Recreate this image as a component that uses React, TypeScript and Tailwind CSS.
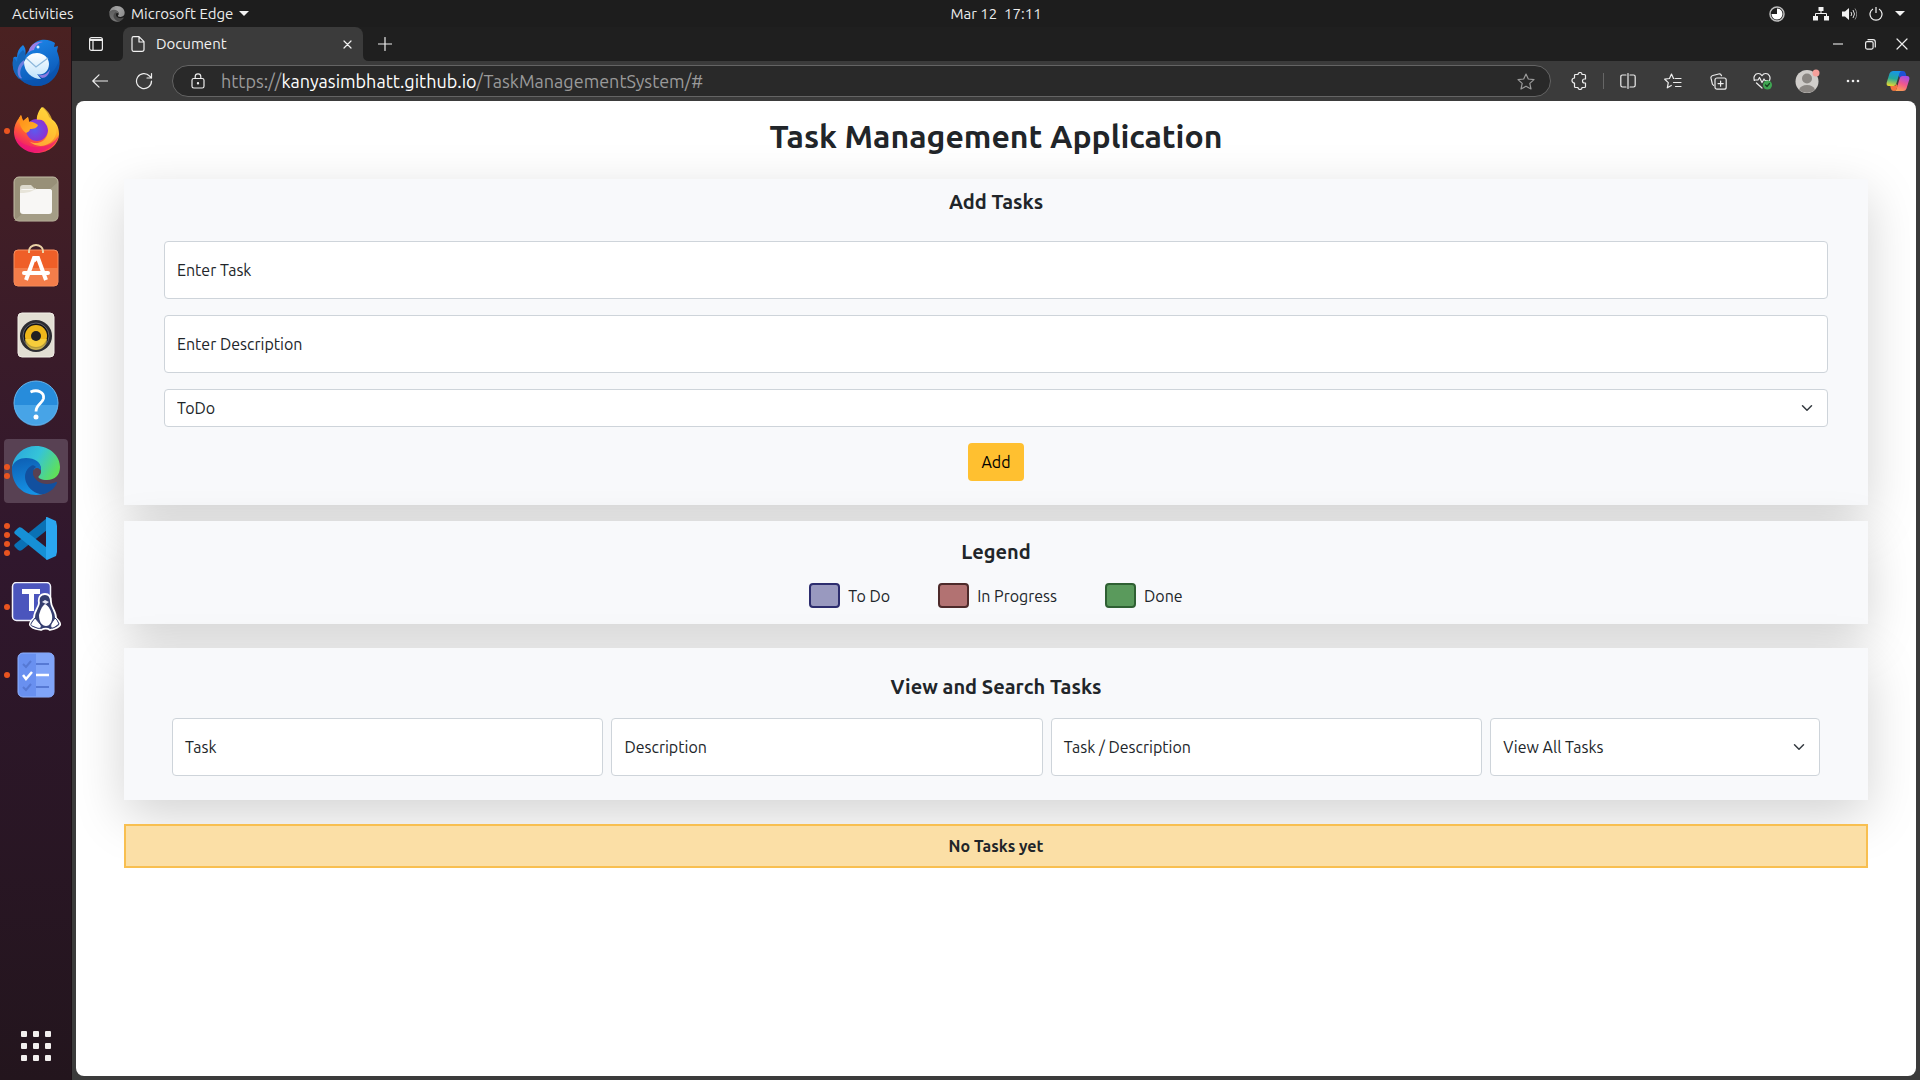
import React, { ReactNode } from "react";

/* ---------- Dock icons ---------- */

const Thunderbird = () => (
  <svg width="50" height="50" viewBox="0 -1 50 50" aria-hidden="true">
    <defs>
      <linearGradient id="tb1" x1="0" y1="0" x2="0.4" y2="1">
        <stop offset="0" stopColor="#1f8df0" />
        <stop offset="1" stopColor="#0b57b5" />
      </linearGradient>
      <linearGradient id="tb2" x1="0" y1="0" x2="0" y2="1">
        <stop offset="0" stopColor="#ffffff" />
        <stop offset="1" stopColor="#bfe2fb" />
      </linearGradient>
    </defs>
    <path d="M2 21c-1 7 1 15 8 20 9 8 23 8 31 0 8-7 9-18 6-26l-1-3 1-5-4 1 1-4c-3-2-8-4-14-3-5 1-10 5-12 10l-4 6c1-4 1-8-2-11-4 3-6 7-6 12-3-1-4 0-4 3z" fill="url(#tb1)" />
    <path d="M2 21c-1 8 1 14 6 19-1-7 1-13 6-18 1-4 1-8-2-11-4 3-6 7-6 12-3-5-4-5-4-2z" fill="#1466bb" />
    <path d="M13 25c-4 4-5 10-2 14-1 1-2 0-3-1-3-6-1-13 5-17z" fill="#6f7fe0" />
    <path d="M18 12c1-6 7-10 14-9-5 1-8 4-9 8-2 0-4 1-6 3z" fill="#9a7fe6" />
    <circle cx="27" cy="8" r="1.5" fill="#d8efff" />
    <path d="M10 41c9 8 23 8 31 0 6-6 8-13 7-20-2 8-7 14-15 17-9 4-18 3-23 3z" fill="#0a4fa8" opacity=".55" />
    <path d="M13 23c3-6 7-9 13-9 7 0 12 5 12 11 0 8-7 12-12 10l4 5c-9 0-17-7-17-17z" fill="url(#tb2)" />
    <path d="M15 19l10 9 12-9" fill="none" stroke="#8db8dc" strokeWidth="1.3" />
    <path d="M27 36c6 1 10-2 12-6-1 6-4 9-8 9z" fill="#8b7ae0" />
  </svg>
);

const Firefox = () => (
  <svg width="50" height="50" viewBox="0 1 50 50" aria-hidden="true">
    <defs>
      <linearGradient id="ff1" x1="0.8" y1="0.1" x2="0.3" y2="1">
        <stop offset="0" stopColor="#fff04a" />
        <stop offset="0.35" stopColor="#ffac27" />
        <stop offset="0.65" stopColor="#ff5a36" />
        <stop offset="1" stopColor="#ee0b7c" />
      </linearGradient>
      <radialGradient id="ff2" cx="0.4" cy="0.5" r="0.7">
        <stop offset="0" stopColor="#5a5cf0" />
        <stop offset="1" stopColor="#9a26c8" />
      </radialGradient>
      <linearGradient id="ff3" x1="0" y1="0" x2="1" y2="1">
        <stop offset="0" stopColor="#ff8a16" />
        <stop offset="1" stopColor="#ffb52b" />
      </linearGradient>
    </defs>
    <path d="M31 2c4 3 6 7 7 10l5 4c4 4 5 9 5 13 0 10-10 19-22 19S3 39 3 27c0-6 2-10 5-14l2-3 2 6c2-1 3-3 5-4l1 5c3-1 6 0 7 1l1-1c-1-6 2-12 5-15z" fill="url(#ff1)" />
    <circle cx="26" cy="25" r="11" fill="url(#ff2)" />
    <path d="M8 13l2-3 2 6 5-4 1 5c3-1 6 1 9 3-1 3-4 4-8 4 0 2-2 3-4 4-4-3-7-8-7-15z" fill="url(#ff3)" />
    <path d="M26 15c4-1 7 0 9 3l-2-1c4 4 5 9 3 14-3 7-12 9-18 5 9 9 24 5 27-7 1-5-1-9-4-13 0-4-3-9-9-14-4 4-6 8-6 13z" fill="#ffc936" opacity=".75" />
    <path d="M4 31c2 10 11 16 22 16 11-1 20-7 22-17-4 8-12 12-22 12S8 38 4 31z" fill="#ec1778" opacity=".7" />
  </svg>
);

const Files = () => (
  <svg width="46" height="46" viewBox="0 0 46 46" aria-hidden="true">
    <rect x="1" y="1" width="44" height="44" rx="5" fill="#989078" stroke="#c3bda6" />
    <path d="M1 45L45 6v35a4 4 0 01-4 4z" fill="#aaa38c" opacity=".7" />
    <path d="M7 12a3 3 0 013-3h8l4 4h8v5H7z" fill="#dcd9cd" />
    <rect x="7" y="13" width="32" height="25" rx="3" fill="#f8f7f5" />
    <path d="M7 19v-5h12l4-2v7z" fill="#e7e4d9" />
    <path d="M7 17q8 0 12-2 3-2 6-2h11a3 3 0 013 3v10H7z" fill="#f8f7f5" />
  </svg>
);

const Software = () => (
  <svg width="46" height="46" viewBox="0 2 46 46" aria-hidden="true">
    <rect x="1" y="8" width="44" height="36" rx="4" fill="#ef5f28" stroke="#f69162" />
    <path d="M1 26h44v14a4 4 0 01-4 4H5a4 4 0 01-4-4z" fill="#f48452" opacity=".8" />
    <path d="M16 11V9a7 6 0 0114 0v2" fill="none" stroke="#ecd3a7" strokeWidth="2" />
    <path d="M13 38l8-22h4l8 22M23 16l-2 3" fill="none" stroke="#fff" strokeWidth="4" />
    <rect x="9" y="29" width="28" height="4" rx="2" fill="#fff" />
  </svg>
);

const Rhythmbox = () => (
  <svg width="38" height="46" viewBox="0 0 38 46" aria-hidden="true">
    <rect x="1" y="1" width="36" height="44" rx="4" fill="#e2ded3" stroke="#f1eee7" />
    <circle cx="19" cy="24" r="16" fill="#2c2c31" />
    <circle cx="19" cy="24" r="13" fill="#141418" stroke="#62646c" />
    <circle cx="19" cy="24" r="11" fill="#eeb71b" />
    <path d="M8 27a11 11 0 0022 0z" fill="#fad549" opacity=".7" />
    <circle cx="19" cy="24" r="5" fill="#202022" />
  </svg>
);

const Help = () => (
  <svg width="46" height="46" viewBox="0 0 46 46" aria-hidden="true">
    <circle cx="23" cy="23" r="22" fill="#278cdb" stroke="#67b6ee" />
    <path d="M1 25h44a22 21 0 01-44 0z" fill="#55aeec" opacity=".7" />
    <path d="M17.500 12c7-3 14 0 13 6.500-1 5-7.500 6-7.500 13" fill="none" stroke="#fff" strokeWidth="2.800" />
    <circle cx="23" cy="37" r="2.500" fill="#fff" />
  </svg>
);

const EdgeLogo = ({ size, gray }: { size: number; gray?: boolean }) => {
  const p = gray ? "eg" : "ec";
  return (
    <svg width={size} height={size} viewBox="0 1 50 50" aria-hidden="true">
      <defs>
        <linearGradient id={p + "1"} x1="0" y1="0.2" x2="1" y2="0.6">
          <stop offset="0" stopColor={gray ? "#8b8b8b" : "#2aa7dd"} />
          <stop offset="0.5" stopColor={gray ? "#a5a5a5" : "#35c4d8"} />
          <stop offset="1" stopColor={gray ? "#8f8f8f" : "#5fe05a"} />
        </linearGradient>
        <linearGradient id={p + "2"} x1="0.2" y1="0" x2="0.4" y2="1">
          <stop offset="0" stopColor={gray ? "#5d5d5d" : "#0d5fb4"} />
          <stop offset="1" stopColor={gray ? "#777777" : "#1593e6"} />
        </linearGradient>
      </defs>
      <path d="M1 22C3 9 13 1 25 1c14 0 24 10 24 21 0 8-5 13-13 13-6 0-9-2-9-4 0-1 3-2 3-7 0-4-4-8-11-8-9 0-16 5-18 6z" fill={`url(#${p}1)`} />
      <path d="M1 22c2-6 8-9 14-9 9 0 15 4 15 11l-3 5c-1-3-4-5-7-5-3 3-3 9 0 14 3 7 10 11 17 9-4 2-8 3-12 3C11 50 0 39 1 22z" fill={`url(#${p}2)`} />
      <path d="M20 21c-6 4-7 10-5 16 3 8 11 13 18 12 6-2 11-6 13-11 0-1 0-1-1-1-11 5-22 0-23-9 0-3 1-5 3-6-2-2-4-2-5-1z" fill={gray ? "#4a4a4a" : "#12509f"} />
      <path d="M22 28c0-3 2-5 4-5s4 2 4 4c0 3-3 4-3 6 0 1 1 2 3 3-4-1-8-4-8-8z" fill={gray ? "#1d1d1d" : "#584153"} />
    </svg>
  );
};

const VSCode = () => (
  <svg width="46" height="46" viewBox="0 0 46 46" aria-hidden="true">
    <path d="M34 2L34 14 9 34c-2 1-3 1-5-1l-2-2c-1-1-1-2 0-3z" fill="#0a71b5" />
    <path d="M34 44V32L9 12c-2-1-3-1-5 1l-2 2c-1 1-1 2 0 3z" fill="#1690d6" />
    <path d="M33 2c0-1 0-1 1-1l9 4 1 5v26l-1 4-9 4-1-1z" fill="#2aa6f0" />
  </svg>
);

const TeamsLinux = () => (
  <svg width="50" height="50" viewBox="0 1 50 50" aria-hidden="true">
    <rect x="1.500" y="1.500" width="38" height="38" rx="4" fill="#4b55bd" stroke="#f2f2fa" strokeWidth="1.500" />
    <path d="M11 8h18v5h-6v17h-5V13h-7z" fill="#fff" />
    <path d="M34 13c-5 0-7 4-6 9 0 4-5 8-5 15-2 2-5 4-4 7 2 4 8 4 11 5 4-2 6-2 9 0 4-1 9-3 10-5s-2-5-4-7c0-7-5-11-5-16 0-5-2-8-6-8z" fill="#343d70" stroke="#fff" strokeWidth="1.800" />
    <path d="M34 23c-3 2-5 7-6 11 0 7 3 11 7 11s7-5 6-11c-1-4-3-9-7-11z" fill="#fff" />
    <path d="M24 37l6 7c1 3-1 4-4 3l-5-2c-2-1-1-2 0-4zM44 37l-4 6c-1 4 1 5 4 3l4-3-2-4z" fill="#fff" stroke="#343d70" strokeWidth="1" />
    <path d="M31 21l3-2 4 2-3 2z" fill="#e8e9f5" />
  </svg>
);

const TodoIcon = () => (
  <svg width="38" height="46" viewBox="0 0 38 46" aria-hidden="true">
    <rect x="1" y="1" width="36" height="44" rx="5" fill="#6990f0" stroke="#8fb1ff" />
    <path d="M19 1h13a5 5 0 015 5v34a5 5 0 01-5 5H19z" fill="#80a4f8" />
    <g fill="none" stroke="#5679d4" strokeWidth="2">
      <path d="M6 12l3 3 5-6M19 12h13M6 35l3 3 5-6M19 35h13" />
    </g>
    <path d="M6 23l3 4 6-7" fill="none" stroke="#fff" strokeWidth="2.500" />
    <path d="M19 23h13" stroke="#fff" strokeWidth="2.500" />
  </svg>
);

type DockItem = { name: string; icon: ReactNode; dots: number; active?: boolean };

const dockItems: DockItem[] = [
  { name: "Thunderbird", icon: <Thunderbird />, dots: 0 },
  { name: "Firefox", icon: <Firefox />, dots: 1 },
  { name: "Files", icon: <Files />, dots: 0 },
  { name: "Software", icon: <Software />, dots: 0 },
  { name: "Rhythmbox", icon: <Rhythmbox />, dots: 0 },
  { name: "Help", icon: <Help />, dots: 0 },
  { name: "Edge", icon: <EdgeLogo size={50} />, dots: 2, active: true },
  { name: "Code", icon: <VSCode />, dots: 4 },
  { name: "Teams", icon: <TeamsLinux />, dots: 1 },
  { name: "To Do app", icon: <TodoIcon />, dots: 1 },
];

const Dock = () => (
  <nav
    aria-label="Dock"
    className="flex w-[72px] shrink-0 flex-col justify-between border-r border-[#1c1218] bg-linear-to-b from-[#4a2121] via-[#30172d] to-[#23151d] px-1 pt-1 pb-0.5"
  >
    <div className="flex flex-col gap-1">
      {dockItems.map((item) => (
        <button
          key={item.name}
          aria-label={item.name}
          className={
            item.active
              ? "relative flex h-16 w-16 items-center justify-center rounded bg-[#584153]"
              : "relative flex h-16 w-16 items-center justify-center rounded"
          }
        >
          <span className="absolute inset-y-0 left-0 flex flex-col items-center justify-center gap-[3px]">
            {Array.from({ length: item.dots }, (_, i) => (
              <span key={i} className="h-1.5 w-1.5 rounded-full bg-[#e95420]" />
            ))}
          </span>
          {item.icon}
        </button>
      ))}
    </div>
    <button aria-label="Show applications" className="flex h-16 w-16 items-center justify-center">
      <span className="grid grid-cols-3 gap-1.5">
        {Array.from({ length: 9 }, (_, i) => (
          <span key={i} className="h-1.5 w-1.5 rounded-[1px] bg-[#f2efee]" />
        ))}
      </span>
    </button>
  </nav>
);

/* ---------- System bar ---------- */

const SystemBar = () => (
  <header className="flex h-[27px] shrink-0 bg-[#1d1d1d] text-[15px] leading-5 text-[#ececec]">
    <div className="flex w-[72px] shrink-0 items-center pl-3">
      <button className="whitespace-nowrap">Activities</button>
    </div>
    <div className="grid flex-1 grid-cols-[1fr_auto_1fr] items-center">
      <button className="flex items-center gap-1.5 pl-[37px]">
        <EdgeLogo size={16} gray />
        <span>Microsoft Edge</span>
        <svg width="10" height="6" viewBox="0 0 10 6" aria-hidden="true">
          <path d="M0 0h10L5 5z" fill="#f2f2f2" />
        </svg>
      </button>
      <button className="whitespace-pre">Mar 12  17:11</button>
      <div className="flex items-center justify-end gap-3 pr-[15px]">
        <button aria-label="Updater" className="mr-4">
          <svg width="16" height="16" viewBox="0 0 16 16" className="block">
            <circle cx="8" cy="8" r="7" fill="#1d1d1d" stroke="#bdbdbd" strokeWidth="1.500" />
            <path d="M8 8V2.500A5.500 5.500 0 112.500 8z" fill="#fff" />
          </svg>
        </button>
        <button aria-label="System menu" className="flex items-center gap-3">
          <svg width="16" height="14" viewBox="0 0 16 14">
            <path d="M5.500 0h5v4h-5zM0 9h5v4.500H0zM11 9h5v4.500h-5z" fill="#f2f2f2" />
            <path d="M8 4v3M2.500 9V6.500h11V9" fill="none" stroke="#f2f2f2" />
          </svg>
          <svg width="16" height="14" viewBox="0 0 16 14">
            <path d="M1 4.500h3L8 1v12L4 9.500H1z" fill="#f2f2f2" />
            <path d="M10 5q1.500 2 0 4M12 3q3 4 0 8" fill="none" stroke="#dcdcdc" />
            <path d="M14 1.500q3.500 5.500 0 11" fill="none" stroke="#888" />
          </svg>
          <svg width="14" height="14" viewBox="0 0 14 14" fill="none" stroke="#f2f2f2" strokeWidth="1.200">
            <path d="M7 0v6M4 2a6 6 0 106 0" />
          </svg>
          <svg width="10" height="6" viewBox="0 0 10 6">
            <path d="M0 0h10L5 5z" fill="#f2f2f2" />
          </svg>
        </button>
      </div>
    </div>
  </header>
);

/* ---------- Browser chrome ---------- */

const IconButton = ({ label, children }: { label: string; children: ReactNode }) => (
  <button aria-label={label} className="flex h-8 w-8 shrink-0 items-center justify-center text-[#ededed]">
    {children}
  </button>
);

const line = { fill: "none", stroke: "currentColor", strokeWidth: 1.2, strokeLinecap: "round", strokeLinejoin: "round" } as const;

const TabStrip = () => (
  <div className="flex h-[34px] shrink-0 items-center bg-[#1f1f1f] pr-0.5 pl-2">
    <IconButton label="Tab actions">
      <svg width="14" height="14" viewBox="0 0 14 14" {...line}>
        <rect x="0.600" y="0.600" width="12.800" height="12.800" rx="2" />
        <path d="M1 2.500h12M1 3.500h12M4 4v9" />
      </svg>
    </IconButton>
    <div className="relative ml-[11px] flex h-[34px] w-60 items-center rounded-t-lg bg-[#3b3b3b] pr-[11px] pl-2 text-[#f2f2f2]">
      <svg width="6" height="6" viewBox="0 0 6 6" className="absolute bottom-0 -left-1.5" aria-hidden="true">
        <path d="M6 0v6H0q6 0 6-6z" fill="#3b3b3b" />
      </svg>
      <svg width="6" height="6" viewBox="0 0 6 6" className="absolute -right-1.5 bottom-0" aria-hidden="true">
        <path d="M0 0v6h6q-6 0-6-6z" fill="#3b3b3b" />
      </svg>
      <svg width="14" height="16" viewBox="0 0 14 16" {...line} aria-hidden="true">
        <path d="M2.500.600h5.500l5 5v8q0 1.800-2 1.800H2.500Q1 15.400 1 13.600V2.400Q1 .600 2.500.600zM8 1v5h5" />
      </svg>
      <span className="flex-1 pl-[11px] text-[15px] leading-5">Document</span>
      <button aria-label="Close tab">
        <svg width="9" height="9" viewBox="0 0 9 9" {...line}>
          <path d="M1 1l7 7M8 1L1 8" />
        </svg>
      </button>
    </div>
    <div className="ml-1.5">
      <IconButton label="New tab">
        <svg width="14" height="14" viewBox="0 0 14 14" {...line}>
          <path d="M7 .500v13M.500 7h13" />
        </svg>
      </IconButton>
    </div>
    <div className="ml-auto flex">
      <IconButton label="Minimize">
        <svg width="10" height="2" viewBox="0 0 10 2">
          <path d="M0 1h10" stroke="#8f8f8f" strokeWidth="2" />
        </svg>
      </IconButton>
      <IconButton label="Restore">
        <svg width="11" height="11" viewBox="0 0 11 11" {...line}>
          <rect x="0.600" y="2.600" width="7.500" height="7.500" rx="1.500" />
          <path d="M3 .700h5q2.300 0 2.300 2.300v5" />
        </svg>
      </IconButton>
      <IconButton label="Close window">
        <svg width="12" height="12" viewBox="0 0 12 12" {...line}>
          <path d="M1 1l10 10M11 1L1 11" />
        </svg>
      </IconButton>
    </div>
  </div>
);

const Toolbar = () => (
  <div className="flex h-10 shrink-0 items-start bg-[#3b3b3b] pt-1 pr-1.5 pl-3">
    <IconButton label="Back">
      <svg width="16" height="14" viewBox="0 0 16 14" {...line}>
        <path d="M15.500 7H.800M7 .800L.800 7 7 13.200" />
      </svg>
    </IconButton>
    <div className="ml-3">
      <IconButton label="Refresh">
        <svg width="18" height="18" viewBox="0 0 18 18" {...line}>
          <path d="M16.500 9A7.500 7.500 0 1114.500 4l2 2M16.500 1.500V6H12" />
        </svg>
      </IconButton>
    </div>
    <div className="mx-3 flex h-8 flex-1 items-center rounded-full border border-[#646464] bg-[#292929] pr-2">
      <svg width="14" height="16" viewBox="0 0 14 16" {...line} className="ml-[18px] shrink-0 text-[#ededed]" aria-hidden="true">
        <rect x="1" y="5.500" width="12" height="9.500" rx="1.800" />
        <path d="M4.200 5.500V3.600a2.800 2.800 0 015.600 0v1.900" />
        <circle cx="7" cy="10.200" r="0.600" fill="currentColor" />
      </svg>
      <a href="#" className="ml-4 flex-1 whitespace-nowrap text-lg leading-6 text-[#9a9a9a]">
        https://<span className="text-white">kanyasimbhatt.github.io</span>/TaskManagementSystem/#
      </a>
      <button aria-label="Add to favorites" className="flex h-8 w-8 items-center justify-center text-[#9a9a9a]">
        <svg width="18" height="17" viewBox="0 0 18 17" {...line}>
          <path d="M9 1l2.300 5 5.700.600-4.200 3.800 1.200 5.600L9 13.200 4 16l1.200-5.600L1 6.600 6.700 6z" />
        </svg>
      </button>
    </div>
    <div className="flex items-center">
      <IconButton label="Extensions">
        <svg width="16" height="18" viewBox="0 0 16 18" {...line}>
          <path d="M3.500 6V3.500Q3.500 2.500 4.500 2.500H7a2 2 0 014 0h2.500q1 0 1 1V7h-1a2 2 0 000 4h1v3.500q0 1-1 1H11a2 2 0 01-4 0H4.500q-1 0-1-1V11a2.500 2.500 0 010-5z" />
        </svg>
      </IconButton>
      <span className="mx-2 h-4 w-px bg-[#666666]" />
      <div className="flex gap-[13px]">
        <IconButton label="Split screen">
          <svg width="16" height="16" viewBox="0 0 16 16" {...line}>
            <path d="M8 .500v15M6 2H2.500Q.800 2 .800 3.700v8.600Q.800 14 2.500 14H6M10 2h3.500q1.700 0 1.700 1.700v8.600q0 1.700-1.700 1.700H10" />
          </svg>
        </IconButton>
        <IconButton label="Favorites">
          <svg width="18" height="16" viewBox="0 0 18 16" {...line}>
            <path d="M10 5.500h-.500L7.500 1l-2 4.500-4.800.700 3.600 3.400-1 5.200 4-2.300M11.500 5.500h5.500M9.500 9.500H17M11.500 13.500H17" />
          </svg>
        </IconButton>
        <IconButton label="Collections">
          <svg width="17" height="17" viewBox="0 0 17 17" {...line}>
            <rect x="5" y="5" width="11.200" height="11.200" rx="2" />
            <path d="M10.600 8v5.200M8 10.600h5.200M3.500 12.300L2.400 11.200 1 5.200Q.600 3 2.800 2.500l6-1.500q2-.400 2.700 1.700" />
          </svg>
        </IconButton>
        <IconButton label="Browser essentials">
          <svg width="20" height="18" viewBox="0 0 20 18" {...line}>
            <path d="M1.500 8.500C0 5 2 1.500 5.300 1.500c2 0 3 1 3.700 2.200.7-1.200 1.700-2.200 3.700-2.200 3.300 0 5.300 3.500 3.800 7M3.500 11L9 16M1 8h4l1.500-2.500 2.500 5L11 7l1 1.500h3" />
            <circle cx="14.500" cy="13" r="4.500" fill="#3fa652" stroke="none" />
            <path d="M12.500 13l1.500 1.500 2.500-3" stroke="#183d20" />
          </svg>
        </IconButton>
        <IconButton label="Profile">
          <svg width="26" height="24" viewBox="0 0 26 24">
            <circle cx="12" cy="12.500" r="11.500" fill="#d0cdca" />
            <circle cx="12" cy="9.500" r="5" fill="#8b8783" />
            <path d="M4 20.500Q6 16 12 16t8 4.500a11.500 11.500 0 01-16 0z" fill="#8b8783" />
            <circle cx="21" cy="4" r="3.500" fill="#f6a09b" />
          </svg>
        </IconButton>
        <IconButton label="Settings and more">
          <svg width="14" height="4" viewBox="0 0 14 4" fill="#ededed">
            <circle cx="2" cy="2" r="1.300" />
            <circle cx="7" cy="2" r="1.300" />
            <circle cx="12" cy="2" r="1.300" />
          </svg>
        </IconButton>
        <IconButton label="Copilot">
          <svg width="24" height="22" viewBox="0 0 24 22">
            <defs>
              <linearGradient id="cp1" x1="0.5" y1="0" x2="0.3" y2="1">
                <stop offset="0" stopColor="#1795e8" />
                <stop offset="0.5" stopColor="#24a99b" />
                <stop offset="1" stopColor="#e8d92f" />
              </linearGradient>
              <linearGradient id="cp2" x1="0.7" y1="0" x2="0.3" y2="1">
                <stop offset="0" stopColor="#a34ee8" />
                <stop offset="0.5" stopColor="#f0578d" />
                <stop offset="1" stopColor="#fba052" />
              </linearGradient>
            </defs>
            <path d="M11 1h6q2 0 2.600 2l.800 3h-4q-2 0-2.500 2L12 5z" fill="#1d51d6" />
            <path d="M7 1h9q-2 0-2.500 2L10.500 13q-.700 3-3 3H3q-3 0-2.300-3.500L3.500 3.500Q4.300 1 7 1z" fill="url(#cp1)" />
            <path d="M17 21H8q2 0 2.500-2l3-10q.700-3 3-3H21q3 0 2.300 3.500l-2.800 9Q19.700 21 17 21z" fill="url(#cp2)" />
            <path d="M8 21q-2.500 0-3-2l-.800-3H8q2 0 2.500-2l1.300 2-1.300 3q-.500 2-2.500 2z" fill="#f5733f" />
          </svg>
        </IconButton>
      </div>
    </div>
  </div>
);

/* ---------- Task page ---------- */

const FloatingInput = ({ id, label }: { id: string; label: string }) => (
  <div className="relative">
    <input
      id={id}
      type="text"
      className="block h-[58px] w-full rounded border border-[#ced4da] bg-white px-3 text-base outline-none"
    />
    <label htmlFor={id} className="pointer-events-none absolute inset-0 flex items-center px-[13px] text-base">
      {label}
    </label>
  </div>
);

const SelectField = ({ id, label, options, tall }: { id: string; label: string; options: string[]; tall?: boolean }) => (
  <div className="relative">
    <select
      id={id}
      aria-label={label}
      className={
        tall
          ? "block h-[58px] w-full appearance-none rounded border border-[#ced4da] bg-white px-3 text-base outline-none"
          : "block h-[38px] w-full appearance-none rounded border border-[#ced4da] bg-white px-3 text-base outline-none"
      }
    >
      {options.map((o) => (
        <option key={o}>{o}</option>
      ))}
    </select>
    <span className="pointer-events-none absolute inset-y-0 right-[13px] flex items-center">
      <svg width="16" height="12" viewBox="0 0 16 16" fill="none" stroke="#343a40" strokeWidth="2" strokeLinecap="round" strokeLinejoin="round" aria-hidden="true">
        <path d="M2 5l6 6 6-6" />
      </svg>
    </span>
  </div>
);

const legend = [
  { name: "To Do", swatch: "h-[25px] w-[31px] rounded border-2 border-[#2d2d6e] bg-[#9999bf]" },
  { name: "In Progress", swatch: "h-[25px] w-[31px] rounded border-2 border-[#4d2a2a] bg-[#b27272]" },
  { name: "Done", swatch: "h-[25px] w-[31px] rounded border-2 border-[#2f6033] bg-[#5a9a5c]" },
];

const TaskPage = () => (
  <main className="mr-1 mb-1 ml-1 flex-1 overflow-hidden rounded-lg bg-white px-12 pt-[15px] text-[#212529]">
    <h1 className="text-center text-[32px] leading-10 font-bold">Task Management Application</h1>

    <form
      className="mt-[23px] bg-[#f8f9fb] px-10 pt-[11px] pb-6 shadow-[0_16px_48px_rgba(0,0,0,0.175)]"
      onSubmit={(e) => e.preventDefault()}
    >
      <h2 className="text-center text-xl leading-6 font-bold">Add Tasks</h2>
      <div className="mt-[27px] flex flex-col gap-4">
        <FloatingInput id="task" label="Enter Task" />
        <FloatingInput id="description" label="Enter Description" />
        <SelectField id="status" label="Status" options={["ToDo", "In Progress", "Done"]} />
        <button type="submit" className="h-[38px] self-center rounded bg-[#ffc030] px-[13px] text-base text-black">
          Add
        </button>
      </div>
    </form>

    <section className="mt-4 bg-[#f8f9fb] pt-[19px] pb-4 shadow-[0_16px_48px_rgba(0,0,0,0.175)]">
      <h2 className="text-center text-xl leading-6 font-bold">Legend</h2>
      <ul className="mt-[19px] flex justify-center gap-12">
        {legend.map((l) => (
          <li key={l.name} className="flex items-center gap-2">
            <span className={l.swatch} />
            <span className="text-base leading-6">{l.name}</span>
          </li>
        ))}
      </ul>
    </section>

    <section className="mt-6 bg-[#f8f9fb] px-12 pt-[27px] pb-6 shadow-[0_16px_48px_rgba(0,0,0,0.175)]">
      <h2 className="text-center text-xl leading-6 font-bold">View and Search Tasks</h2>
      <div className="mt-[19px] grid grid-cols-[17fr_17fr_17fr_13fr] gap-2">
        <FloatingInput id="search-task" label="Task" />
        <FloatingInput id="search-description" label="Description" />
        <FloatingInput id="search-both" label="Task / Description" />
        <SelectField id="view" label="View" options={["View All Tasks", "ToDo", "In Progress", "Done"]} tall />
      </div>
    </section>

    <p className="relative mt-6 border-2 border-[#f8bf50] bg-[#fbdfa6] py-2 text-center text-base leading-6 font-bold">
      No Tasks yet
    </p>
  </main>
);

export default function App() {
  return (
    <div className="flex h-screen flex-col bg-[#3b3b3b] font-['Ubuntu','Open_Sans',sans-serif]">
      <SystemBar />
      <div className="flex min-h-0 flex-1">
        <Dock />
        <div className="flex min-w-0 flex-1 flex-col">
          <TabStrip />
          <Toolbar />
          <TaskPage />
        </div>
      </div>
    </div>
  );
}
